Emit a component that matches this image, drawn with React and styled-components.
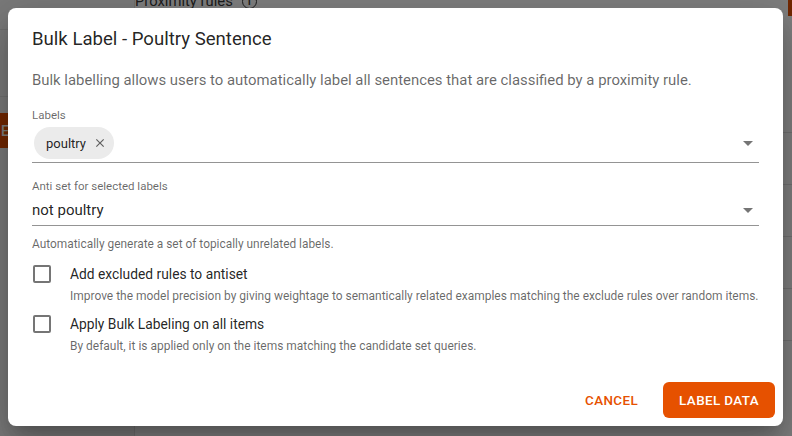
import React from "react";
import styled, { createGlobalStyle } from "styled-components";

const Global = createGlobalStyle`
  html, body { margin: 0; padding: 0; width: 792px; height: 436px; overflow: hidden; }
  body { font-family: Roboto, "Noto Sans", sans-serif; background: #fff; }
  * { box-sizing: border-box; }
`;

const ORANGE = "#e65100";

const Page = styled.div`
  position: relative;
  width: 792px;
  height: 436px;
  overflow: hidden;
  display: grid;
  grid-template-columns: 135px 1fr;
  background: #fff;
`;

const Side = styled.aside`
  background: #f4f4f4;
  border-right: 1px solid #e0e0e0;
  display: flex;
  flex-direction: column;
`;

const SideTop = styled.div`
  height: 29px;
`;

const SideMenu = styled.div`
  height: 68px;
  border-top: 1px solid #e0e0e0;
  border-bottom: 1px solid #e0e0e0;
  display: flex;
  align-items: center;
  color: #222;
  font-size: 20px;
  line-height: 1;
`;

const SideButton = styled.div`
  margin-top: 16px;
  width: 120px;
  height: 35px;
  background: ${ORANGE};
  color: #fff;
  font-size: 14px;
  font-weight: 500;
  display: flex;
  align-items: center;
  justify-content: flex-end;
  padding-right: 111px;
`;

const Main = styled.main`
  display: flex;
  flex-direction: column;
`;

const MainHead = styled.div`
  height: 20px;
  margin-top: -9px;
  font-size: 14.8px;
  color: #3a3a3a;
  display: flex;
  gap: 9px;
  align-items: center;
`;

const Info = styled.span`
  display: inline-flex;
  align-items: center;
  justify-content: center;
  width: 15px;
  height: 15px;
  border: 1.5px solid #3a3a3a;
  border-radius: 50%;
  font-size: 10px;
  font-weight: 700;
`;

const CornerTag = styled.div`
  position: absolute;
  right: 0;
  top: 0;
  width: 4px;
  height: 16px;
  background: ${ORANGE};
`;

const Table = styled.div`
  margin-top: 88px;
  display: flex;
  flex-direction: column;
`;

const TRow = styled.div`
  height: 52px;
  border-bottom: 1px solid #e0e0e0;
  display: flex;
  align-items: center;
  justify-content: flex-end;
  font-size: 15px;
  color: #222;
  margin-right: -25px;
`;

const THead = styled(TRow)`
  height: 34px;
  align-items: flex-start;
  line-height: 20px;
  font-weight: 500;
`;

const Backdrop = styled.div`
  position: absolute;
  inset: 0;
  background: rgba(0, 0, 0, 0.5);
  display: flex;
  padding: 8px 9px 10px 8px;
`;

const Dialog = styled.div`
  flex: 1;
  min-width: 0;
  background: #fff;
  border-radius: 8px;
  box-shadow: 0px 11px 15px -7px rgba(0,0,0,0.2), 0px 24px 38px 3px rgba(0,0,0,0.14), 0px 9px 46px 8px rgba(0,0,0,0.12);
  display: flex;
  flex-direction: column;
  color: rgba(0,0,0,0.87);
`;

const Title = styled.h2`
  margin: 0;
  padding: 17px 24px 15px;
  font-size: 18.6px;
  font-weight: 400;
  line-height: 28px;
  color: rgba(0,0,0,0.87);
`;

const Content = styled.div`
  padding: 0 24px;
  display: flex;
  flex-direction: column;
  min-width: 0;
`;

const Lead = styled.p`
  margin: 0 0 15px;
  font-size: 14.9px;
  line-height: 24px;
  color: rgba(0,0,0,0.6);
`;

const Field = styled.div`
  display: flex;
  flex-direction: column;
  border-bottom: 1px solid rgba(0,0,0,0.42);
  margin-bottom: ${(p) => p.$mb || 0}px;
`;

const FieldLabel = styled.label`
  font-size: 11.5px;
  line-height: 16px;
  color: rgba(0,0,0,0.6);
`;

const FieldRow = styled.div`
  display: flex;
  align-items: center;
  justify-content: space-between;
  height: ${(p) => p.$h}px;
  padding: ${(p) => p.$pad || "0"};
`;

const Value = styled.span`
  font-size: 15px;
  color: rgba(0,0,0,0.87);
`;

const Chip = styled.span`
  display: inline-flex;
  align-items: center;
  height: 32px;
  border-radius: 16px;
  background: #ebebeb;
  padding: 0 7px 0 12px;
  gap: 7px;
  font-size: 13px;
  color: rgba(0,0,0,0.87);
  margin-left: 2px;
`;

const Caret = styled.svg`
  width: 24px;
  height: 24px;
  fill: rgba(0,0,0,0.54);
  margin-right: -1px;
`;

const Helper = styled.p`
  margin: 10px 0 0;
  font-size: 11.9px;
  line-height: 16px;
  color: rgba(0,0,0,0.6);
`;

const Option = styled.div`
  display: grid;
  grid-template-columns: 38px minmax(0, 1fr);
  align-items: start;
  margin-top: ${(p) => p.$mt || 0}px;
`;

const Box = styled.span`
  margin-left: 1px;
  margin-top: 3px;
  width: 18px;
  height: 18px;
  border: 2px solid rgba(0,0,0,0.54);
  border-radius: 2px;
`;

const OptText = styled.div`
  display: flex;
  flex-direction: column;
  gap: 2px;
  min-width: 0;
`;

const OptLabel = styled.span`
  font-size: 13.8px;
  line-height: 24px;
  color: rgba(0,0,0,0.87);
`;

const OptDesc = styled.span`
  font-size: 11.97px;
  line-height: 16px;
  white-space: nowrap;
  color: rgba(0,0,0,0.6);
`;

const Actions = styled.div`
  margin-top: auto;
  display: flex;
  justify-content: flex-end;
  align-items: center;
  gap: 9px;
  padding: 0 8px 8px;
`;

const Button = styled.button`
  font-family: Roboto, sans-serif;
  font-size: 13.4px;
  font-weight: 500;
  letter-spacing: 0.4px;
  text-transform: uppercase;
  height: 36px;
  border: none;
  border-radius: 6px;
  cursor: pointer;
  padding: 0 16px;
  background: ${(p) => (p.$primary ? ORANGE : "transparent")};
  color: ${(p) => (p.$primary ? "#fff" : ORANGE)};
`;

const CloseIcon = () => (
  <svg width="14" height="14" viewBox="0 0 24 24" fill="rgba(0,0,0,0.6)">
    <path d="M19 6.41 17.59 5 12 10.59 6.41 5 5 6.41 10.59 12 5 17.59 6.41 19 12 13.41 17.59 19 19 17.59 13.41 12z" />
  </svg>
);

const ArrowDown = () => (
  <Caret viewBox="0 0 24 24">
    <path d="M7 10l5 5 5-5z" />
  </Caret>
);

export default function App() {
  return (
    <>
      <Global />
      <Page>
        <Side>
          <SideTop />
          <SideMenu>⋮</SideMenu>
          <SideButton>E</SideButton>
        </Side>
        <Main>
          <MainHead>Proximity rules <Info>i</Info></MainHead>
          <Table>
            <THead>Ty</THead>
            <TRow>n</TRow>
            <TRow>n</TRow>
            <TRow>n</TRow>
            <TRow>n</TRow>
          </Table>
        </Main>
        <CornerTag />
        <Backdrop>
          <Dialog>
            <Title>Bulk Label - Poultry Sentence</Title>
            <Content>
              <Lead>Bulk labelling allows users to automatically label all sentences that are classified by a proximity rule.</Lead>
              <Field $mb={15}>
                <FieldLabel>Labels</FieldLabel>
                <FieldRow $h={39} $pad="4px 0 3px">
                  <Chip>poultry <CloseIcon /></Chip>
                  <ArrowDown />
                </FieldRow>
              </Field>
              <Field>
                <FieldLabel>Anti set for selected labels</FieldLabel>
                <FieldRow $h={31}>
                  <Value>not poultry</Value>
                  <ArrowDown />
                </FieldRow>
              </Field>
              <Helper>Automatically generate a set of topically unrelated labels.</Helper>
              <Option $mt={10}>
                <Box />
                <OptText>
                  <OptLabel>Add excluded rules to antiset</OptLabel>
                  <OptDesc>Improve the model precision by giving weightage to semantically related examples matching the exclude rules over random items.</OptDesc>
                </OptText>
              </Option>
              <Option $mt={8}>
                <Box />
                <OptText>
                  <OptLabel>Apply Bulk Labeling on all items</OptLabel>
                  <OptDesc>By default, it is applied only on the items matching the candidate set queries.</OptDesc>
                </OptText>
              </Option>
            </Content>
            <Actions>
              <Button>Cancel</Button>
              <Button $primary>Label Data</Button>
            </Actions>
          </Dialog>
        </Backdrop>
      </Page>
    </>
  );
}
